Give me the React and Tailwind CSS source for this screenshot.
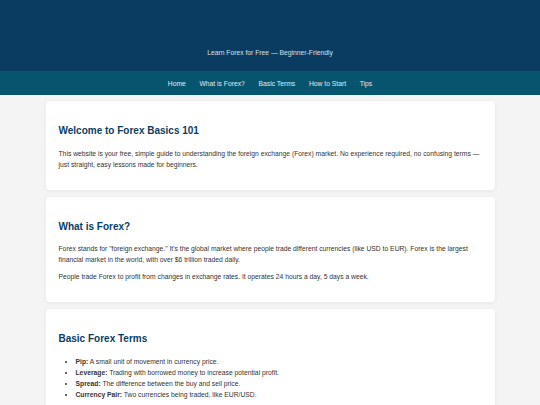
import React from 'react';

const navItems = ['Home', 'What is Forex?', 'Basic Terms', 'How to Start', 'Tips'];

const terms = [
  { term: 'Pip:', text: 'A small unit of movement in currency price.' },
  { term: 'Leverage:', text: 'Trading with borrowed money to increase potential profit.' },
  { term: 'Spread:', text: 'The difference between the buy and sell price.' },
  { term: 'Currency Pair:', text: 'Two currencies being traded, like EUR/USD.' }
];

// Section card wrapper
const Card = ({ title, children }) => (
  <section className="bg-white rounded-[4px] shadow-[0_1px_4px_rgba(0,0,0,0.06)] px-[13px] pt-[24px] pb-[20px]">
    <h2 className="text-[10px] leading-[12px] font-bold text-[#0b3d62] mb-[10.5px]">{title}</h2>
    {children}
  </section>
);

const App = () => {
  return (
    <div
      className="min-h-screen bg-[#f4f4f4] text-[#333] pb-[20px]"
      style={{ fontFamily: '"Liberation Sans", Arial, sans-serif' }}
    >
      {/* Header */}
      <header className="bg-[#0a3c61] h-[71px] flex flex-col items-center justify-end pb-[14px]">
        <p className="text-[6.75px] leading-[9px] text-[#d6e0e8]">Learn Forex for Free — Beginner-Friendly</p>
      </header>

      {/* Nav */}
      <nav className="bg-[#07546f] h-[24px] flex items-center justify-center gap-[13.7px]">
        {navItems.map((item) => (
          <a key={item} href="#" className="text-[6.75px] leading-[9px] text-[#e2eaf0]">
            {item}
          </a>
        ))}
      </nav>

      <main className="w-[449px] mx-auto mt-[6px] flex flex-col gap-[7px]">
        <Card title="Welcome to Forex Basics 101">
          <p className="text-[6.75px] leading-[11px]">
            This website is your free, simple guide to understanding the foreign exchange (Forex) market. No experience required, no confusing terms — just straight, easy lessons made for beginners.
          </p>
        </Card>

        <Card title="What is Forex?">
          <div className="flex flex-col gap-[6px]">
            <p className="text-[6.75px] leading-[11px]">
              Forex stands for "foreign exchange." It's the global market where people trade different currencies (like USD to EUR). Forex is the largest financial market in the world, with over $6 trillion traded daily.
            </p>
            <p className="text-[6.75px] leading-[11px]">
              People trade Forex to profit from changes in exchange rates. It operates 24 hours a day, 5 days a week.
            </p>
          </div>
        </Card>

        <Card title="Basic Forex Terms">
          <ul className="list-disc pl-[17px] text-[6.75px] leading-[11px]">
            {terms.map((t) => (
              <li key={t.term}>
                <strong>{t.term}</strong> {t.text}
              </li>
            ))}
          </ul>
        </Card>
      </main>
    </div>
  );
};

export default App;
